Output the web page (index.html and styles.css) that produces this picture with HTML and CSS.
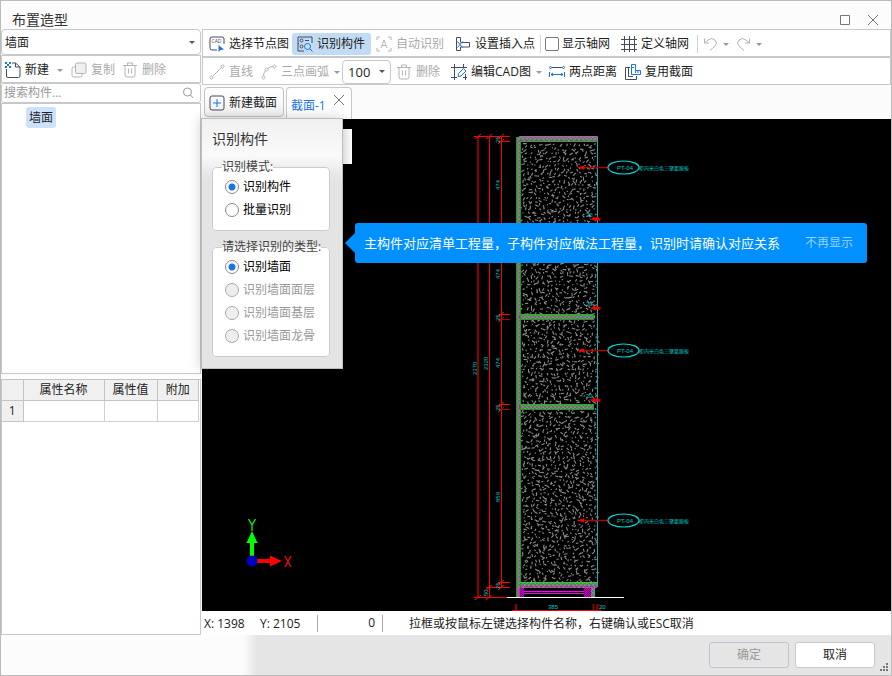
FILE: index.html
```html
<!DOCTYPE html>
<html lang="zh-CN">
<head>
<meta charset="utf-8">
<title>布置造型</title>
<link rel="stylesheet" href="styles.css">
</head>
<body>
<div class="window">
  <header class="titlebar">
    <h1>布置造型</h1>
    <button class="winbtn" aria-label="最大化"><svg width="12" height="12" viewBox="0 0 12 12"><path d="M1.5 1.5h9v9h-9z"/></svg></button>
    <button class="winbtn" aria-label="关闭"><svg width="12" height="12" viewBox="0 0 12 12"><path d="M1 1l10 10M11 1L1 11"/></svg></button>
  </header>

  <main class="main">
    <aside class="side">
      <div class="combo box">
        <select aria-label="构件类型"><option>墙面</option></select>
      </div>
      <div class="tools box">
        <button class="tool"><svg class="ic" viewBox="0 0 16 16"><path d="M1.500 7v7q0 1.500 1.500 1.500h10.500q1.500 0 1.500-1.500V5L10.500 1H7"/><path d="M10.500 1v4H15"/><path class="dots" d="M0 0h2v2H0zM4 0h2v2H4zM2 2h2v2H2zM0 4h2v2H0zM4 4h2v2H4z"/></svg>新建</button>
        <span class="caret gray"></span>
        <button class="tool copy" disabled><svg class="ic" viewBox="0 0 16 16"><path d="M4 5H2.500Q1 5 1 6.500v7Q1 15 2.500 15h7q1.500 0 1.500-1.500V12"/><rect x="4.500" y="1" width="10.500" height="10.500" rx="1.500" fill="#f0f0f0"/></svg>复制</button>
        <button class="tool" disabled><svg class="ic" viewBox="0 0 16 16"><path d="M1 3.500h14M5.500 3V1h5v2M3 3.500V13q0 2 2 2h6q2 0 2-2V3.500M6.500 6.500v5M9.500 6.500v5"/></svg>删除</button>
      </div>
      <div class="search box">
        <input type="text" aria-label="搜索构件" placeholder="搜索构件...">
        <svg width="12" height="12" viewBox="0 0 12 12"><circle cx="5.500" cy="5" r="4"/><path d="M8.500 8l2.500 3"/></svg>
      </div>
      <div class="tree box"><button class="node">墙面</button></div>
      <div class="props">
        <table>
          <colgroup><col class="c-no"><col class="c-name"><col class="c-value"><col class="c-extra"></colgroup>
          <thead><tr><th></th><th>属性名称</th><th>属性值</th><th>附加</th></tr></thead>
          <tbody><tr><th>1</th><td></td><td></td><td></td></tr></tbody>
        </table>
      </div>
    </aside>

    <section class="work">
      <div class="tools bar">
        <button class="tool"><svg class="ic" viewBox="0 0 16 16"><path d="M8 14H3q-2 0-2-2V3q0-2 2-2h10q2 0 2 2v5"/><text x="2.500" y="7">CAD</text><path class="bf" d="M9.500 9v7l2-2 3.500-.5z"/></svg>选择节点图</button>
        <button class="tool active"><svg class="ic" viewBox="0 0 16 16"><path d="M7 15H1V1h14v6"/><circle cx="4.500" cy="4.500" r="1.500"/><circle cx="4.500" cy="10.500" r="1.500"/><path d="M8 4.500h4M1 7.500h1"/><circle class="b" cx="10.500" cy="10.500" r="3"/><path class="b" d="M12.800 12.800L15.500 15.500"/></svg>识别构件</button>
        <button class="tool" disabled><svg class="ic" viewBox="0 0 16 16"><path d="M4 1H1v3M12 1h3v3M1 12v3h3M15 12v3h-3M5 12l3-8 3 8M6 9.500h4"/></svg>自动识别</button>
        <button class="tool far"><svg class="ic" viewBox="0 0 16 16"><path d="M5.500 6V1.500h-4v13h4V11M5.500 6.500h9v4.500h-9"/><path class="b" d="M2.500 5.500l5 6M7.500 5.500l-5 6"/></svg>设置插入点</button>
        <span class="sep"></span>
        <label class="check"><input type="checkbox">显示轴网</label>
        <button class="tool grid"><svg class="ic" viewBox="0 0 16 16"><path d="M0 3.500h16M0 8.500h16M0 13.500h16M3.500 0v16M8.500 0v16M13.500 0v16"/></svg>定义轴网</button>
        <span class="sep wide"></span>
        <button class="tool only" disabled aria-label="撤销"><svg class="ic" viewBox="0 0 16 16"><path d="M1.500 2.500V7H6M1.500 7L5 4q4-3 7 0t0 6l-5 4.500"/></svg></button>
        <span class="caret gray"></span>
        <button class="tool only" disabled aria-label="重做"><svg class="ic" viewBox="0 0 16 16"><path d="M13.500 2.500V7H9M13.500 7L10 4Q6 1 3 4t0 6l5 4.500"/></svg></button>
        <span class="caret gray"></span>
      </div>
      <div class="tools bar">
        <button class="tool" disabled><svg class="ic" viewBox="0 0 16 16"><circle cx="2.500" cy="13.500" r="1.500"/><circle cx="13.500" cy="2.500" r="1.500"/><path d="M3.500 12.500l9-9"/></svg>直线</button>
        <button class="tool" disabled><svg class="ic" viewBox="0 0 16 16"><circle cx="2.500" cy="13.500" r="1.500"/><circle cx="5.500" cy="5.500" r="1.500"/><circle cx="13.500" cy="2.500" r="1.500"/><path d="M2.500 12q0-3 2-5.500M7 4.500Q9 2.500 12 2.500"/></svg>三点画弧</button>
        <span class="caret gray tight"></span>
        <div class="combo scale"><select aria-label="比例"><option>100</option></select></div>
        <button class="tool" disabled><svg class="ic" viewBox="0 0 16 16"><path d="M1 3.500h14M5.500 3V1h5v2M3 3.500V13q0 2 2 2h6q2 0 2-2V3.500M6.500 6.500v5M9.500 6.500v5"/></svg>删除</button>
        <button class="tool far"><svg class="ic" viewBox="0 0 16 16"><path d="M0 3.500h16M3.500 0v16M0 13.500h6M12.500 0v3M14.500 10v6M12 13.500h4"/><path class="b" d="M7 12.500l.5-3 5-5 2.500 2.500-5 5z"/></svg>编辑CAD图</button>
        <span class="caret gray tight"></span>
        <button class="tool"><svg class="ic" viewBox="0 0 16 16"><path d="M3 3.500h10"/><circle class="b" cx="1.500" cy="3.500" r="1"/><circle class="b" cx="14.500" cy="3.500" r="1"/><path class="b" d="M.5 8v5M15.500 8v5M2 10.500h12M4 9l-2 1.500 2 1.500M12 9l2 1.500-2 1.500"/></svg>两点距离</button>
        <button class="tool"><svg class="ic" viewBox="0 0 16 16"><path d="M5 3.500H.5v12h11V12M3.500 3.500v9H8"/><path class="b" d="M6.500.5h4v6h5v4h-9zM7 3.500h2M10.500 7v2M13 7v2"/></svg>复用截面</button>
      </div>
      <nav class="tabs">
        <button class="newtab"><svg class="ic" viewBox="0 0 16 16"><rect x="1" y="1" width="14" height="14" rx="2"/><path class="b" d="M8 4v8M4 8h8"/></svg>新建截面</button>
        <div class="tab"><a href="#section-1">截面-1</a><button aria-label="关闭截面"><svg width="12" height="12" viewBox="0 0 12 12"><path d="M1 1l10 10M11 1L1 11"/></svg></button></div>
      </nav>

      <div class="canvas" id="section-1">
        <svg class="drawing" viewBox="202 119 689 492" preserveAspectRatio="xMinYMin slice">
          <defs>
            <pattern id="ply" width="4" height="4" patternUnits="userSpaceOnUse"><rect width="4" height="4" fill="#707070"/><path d="M0 1h2M2 3h2" stroke="#989898"/></pattern>
            <pattern id="hatch" width="2" height="2" patternUnits="userSpaceOnUse"><rect width="2" height="2" fill="#c0c"/><path d="M0 0h1v1H0zM1 1h1v1H1z" fill="#606"/></pattern>
            <g id="note">
              <path d="M584 167.500h24" stroke="#b00000" stroke-width="1.500"/>
              <path d="M577 167.500l7-2v4z" fill="red"/>
              <ellipse cx="623.500" cy="167.500" rx="15.500" ry="6.500" fill="none" stroke="#00d8d8" stroke-width="1.200"/>
              <text x="617" y="170" class="dim">PT-04</text>
              <text x="639" y="170" class="mat">柜内米白色三聚氰胺板</text>
            </g>
            <g id="inset">
              <text x="586" y="217" class="dim">20</text>
              <path d="M590 219h11M593 216.500l3 5M597 216.500l3 5" stroke="red"/>
              <path d="M591 219l4-2v4zM600 219l-4-2v4z" fill="red"/>
            </g>
            <g id="thick">
              <path d="M499 314.500h11M498 317l6-5" stroke="red"/>
              <path d="M499 319.500h11M498 322l6-5" stroke="#b00000"/>
              <text class="dim" transform="translate(500 321) rotate(-90)">25</text>
            </g>
          </defs>

          <path id="grain" fill="none" stroke="#8c8c8c" stroke-width="1.100"/>

          <g fill="url(#ply)" shape-rendering="crispEdges">
            <rect x="516" y="137" width="5" height="460"/>
            <rect x="520" y="136" width="77" height="6"/>
            <rect x="520" y="314" width="74" height="6"/>
            <rect x="520" y="404" width="74" height="6"/>
            <rect x="520" y="582" width="77" height="6"/>
            <rect x="590" y="588" width="4" height="9"/>
          </g>
          <g fill="none" stroke="#0c0">
            <path stroke="#16a016" d="M516.500 137v460M520.500 141v456"/>
            <path d="M520 141.500h77M520 314.500h74M520 404.500h74"/>
            <path stroke="#16a016" d="M593.500 314v5.500h-73M593.500 404v5.500h-73"/>
            <path stroke="#0e0" d="M520 582.500h77"/>
          </g>
          <g fill="none" stroke="#d0d">
            <path stroke="#b060b0" d="M519 136.500h78.500v5"/>
            <path stroke-dasharray="3 2" d="M520 140.500h77M520 586.500h77"/>
            <path stroke="#f0f" d="M524 591.500h61M524 593.500h61M519.500 588v9"/>
            <path d="M519.500 315v4M519.500 405v4"/>
          </g>
          <path d="M520 588h4v9h-4zM584 588h7v9h-7z" fill="url(#hatch)"/>
          <path d="M597.500 141v446M594.500 588v9" stroke="#10b4b4"/>

          <g stroke="red" fill="none">
            <path stroke="#900000" stroke-width="2" d="M478 136v461"/>
            <path d="M489.500 136v461M501.500 136v452M474 136.500h36M499 141.500h11M498 582.500h12M486 587.500h24M474 597.500h33"/>
          </g>
          <path d="M475 139l6-5M486 139l6-5M498 139l6-5M498 144l6-5M498 585l6-5M498 590l6-5M486 590l6-5M475 600l6-5M486 600l6-5" stroke="red"/>
          <text class="dim" transform="translate(500 143) rotate(-90)">25</text>
          <text class="dim" transform="translate(500 190) rotate(-90)">474</text>
          <text class="dim" transform="translate(500 279) rotate(-90)">474</text>
          <text class="dim" transform="translate(500 368) rotate(-90)">474</text>
          <text class="dim" transform="translate(500 502) rotate(-90)">859</text>
          <text class="dim" transform="translate(500 589) rotate(-90)">25</text>
          <text class="dim" transform="translate(488 596) rotate(-90)">50</text>
          <text class="dim" transform="translate(488 370) rotate(-90)">2320</text>
          <text class="dim" transform="translate(477 375) rotate(-90)">2370</text>
          <use href="#thick"/><use href="#thick" y="90"/>
          <use href="#inset"/><use href="#inset" y="89"/><use href="#inset" y="181"/>
          <use href="#note"/><use href="#note" y="183"/><use href="#note" y="353"/>

          <path d="M507 597.500h117" stroke="#fff"/>
          <path d="M512 610.500h89" stroke="red"/>
          <path d="M516 604v6M593.500 604v6M597.500 604v6" stroke="#900000" stroke-width="2"/>
          <text class="dim" x="548" y="609">385</text><text class="dim" x="599" y="609">20</text>

          <path d="M252 556v-14" stroke="#0f0" stroke-width="4"/><path d="M246.500 543l5.500-12 5.500 12z" fill="#0f0"/>
          <path d="M257 561h14" stroke="red" stroke-width="4"/><path d="M270 555.500l12 5.500-12 5.500z" fill="red"/>
          <circle cx="252" cy="561" r="5.500" fill="#0000c0"/>
          <path d="M248.500 519l3.500 6 3.500-6M252 525v6" fill="none" stroke="#0f0" stroke-width="1.300"/>
          <path d="M285 556l6 11M291 556l-6 11" stroke="red" stroke-width="1.300"/>
        </svg>

        <form class="panel">
          <h2>识别构件</h2>
          <fieldset>
            <legend>识别模式:</legend>
            <label><input type="radio" name="mode" checked>识别构件</label>
            <label><input type="radio" name="mode">批量识别</label>
          </fieldset>
          <fieldset>
            <legend>请选择识别的类型:</legend>
            <label><input type="radio" name="kind" checked>识别墙面</label>
            <label><input type="radio" name="kind" disabled>识别墙面面层</label>
            <label><input type="radio" name="kind" disabled>识别墙面基层</label>
            <label><input type="radio" name="kind" disabled>识别墙面龙骨</label>
          </fieldset>
        </form>
        <div class="peek"></div>
        <div class="tip" role="status">主构件对应清单工程量，子构件对应做法工程量，识别时请确认对应关系<button>不再显示</button></div>
      </div>

      <div class="status">
        <span class="coord">X: 1398</span><span class="coord">Y: 2105</span>
        <span class="count">0</span>
        <span class="hint">拉框或按鼠标左键选择构件名称，右键确认或ESC取消</span>
      </div>
    </section>
  </main>

  <footer class="footer">
    <button disabled>确定</button>
    <button>取消</button>
    <svg class="grip" width="9" height="9" viewBox="0 0 9 9"><path d="M6 0h2v2H6zM3 3h2v2H3zM6 3h2v2H6zM0 6h2v2H0zM3 6h2v2H3zM6 6h2v2H6z"/></svg>
  </footer>
</div>
<script src="grain.js"></script>
</body>
</html>
```
FILE: styles.css
```css
* { box-sizing: border-box; }
body {
  margin: 0;
  font: 12px/16px "Open Sans", "Noto Sans CJK SC", sans-serif;
  color: #222;
}
button, input, select { font: inherit; color: inherit; margin: 0; }
button { border: 0; padding: 0; background: none; white-space: nowrap; }
h1, h2 { margin: 0; font-size: 14px; line-height: 20px; font-weight: normal; color: #333; }

.window {
  height: 100vh;
  display: flex;
  flex-direction: column;
  border: 1px solid #bbb;
  background: #fcfcfc;
}
.titlebar { display: flex; align-items: center; gap: 16px; height: 28px; flex: none; padding: 9px 12px 0 11px; }
.titlebar h1 { flex: 1; }
.winbtn { display: flex; }
.winbtn svg, .tab svg { fill: none; stroke: #777; }

.main { flex: 1; min-height: 0; display: grid; grid-template-columns: 200px minmax(0, 1fr); gap: 1px; }
.side { display: flex; flex-direction: column; min-height: 0; }
.box { border: 1px solid #c6c8cc; background: #fff; flex: none; }

.combo { position: relative; height: 26px; border-radius: 4px; }
.combo select { width: 100%; height: 100%; appearance: none; border: 0; outline: 0; background: none; padding: 1px 3px 0; }
.combo::after, .caret {
  content: "";
  width: 0;
  height: 0;
  border: 3px solid transparent;
  border-top-color: #555;
  border-bottom: 0;
}
.combo::after { position: absolute; right: 5px; top: 11px; pointer-events: none; }
.caret { margin: 0 4px; flex: none; }
.caret.gray { border-top-color: #999; }
.caret.tight { margin: 0 2px; }

.tools { display: flex; align-items: center; height: 28px; padding-top: 2px; }
.tool { display: flex; align-items: center; gap: 4px; height: 22px; padding: 0 3px 0 5px; border-radius: 3px; }
.tool:disabled { color: #aaa; }
.tool.active { background: #c2dbf4; padding-right: 6px; }
.tool.far, .tool.grid { margin-left: 3px; }
.tool.only { padding: 0 0 0 3px; }
.ic { width: 16px; height: 16px; fill: none; stroke: #454b5e; flex: none; }
:disabled .ic { stroke: #b4b4b4; }
.ic .b { stroke: #1a73e8; }
.ic .bf { fill: #1a73e8; stroke: none; }
.ic .dots { fill: #1a73e8; stroke: none; }
.ic text { font-size: 5px; fill: #454b5e; stroke: none; }
.side .tool { padding: 0 4px 0 3px; }
.side .copy { padding-left: 4px; }

.search { display: flex; align-items: center; height: 20px; padding-right: 6px; border-radius: 3px; }
.search input { flex: 1; min-width: 0; border: 0; outline: 0; padding: 0 2px; background: none; }
.search input::placeholder { color: #999; opacity: 1; }
.search svg { fill: none; stroke: #999; }

.tree { flex: 0 1 271px; padding: 3px 24px; }
.node { height: 21px; padding: 0 3px; border-radius: 3px; background: #cce2fa; }

.props { flex: 1; min-height: 0; margin-top: 5px; border: 1px solid #c6c8cc; background: #fff; }
.props table { width: 197px; table-layout: fixed; border-collapse: collapse; margin: -1px 0 0 0; }
.props th, .props td { height: 21px; padding: 0; border: 1px solid #d0d0d0; font-weight: normal; text-align: center; }
.props th { background: #f0f0f0; border-color: #c4c4c4; }
.props tr > :first-child { border-left: 0; }
.c-no { width: 21px; }
.c-name { width: 81px; }
.c-value { width: 53px; }

.work { display: flex; flex-direction: column; min-width: 0; min-height: 0; }
.bar { border: 1px solid #c6c8cc; background: #fff; flex: none; padding-left: 1px; }
.sep { width: 1px; height: 18px; background: #d0d0d0; margin: 0 4px 0 2px; flex: none; }
.sep.wide { margin: 0 2px 0 5px; }
.check { display: flex; align-items: center; gap: 3px; margin-right: 3px; white-space: nowrap; }
.check input { appearance: none; width: 14px; height: 14px; border: 1px solid #777; border-radius: 2px; background: #fff; }
.scale { width: 49px; height: 24px; border: 1px solid #c6c8cc; }
.scale select { padding: 0 5px; font-size: 13px; }
.scale.combo::after { top: 9px; }

.tabs { display: flex; gap: 2px; height: 34px; flex: none; padding: 2px 2px 0; background: #fbfbfb; }
.newtab { display: flex; align-items: center; gap: 4px; height: 30px; width: 80px; padding: 1px 4px 0; border: 1px solid #bfc1c5; border-radius: 4px; background: linear-gradient(#fff, #f2f2f2); }
.tab { display: flex; gap: 7px; width: 66px; padding: 0 6px 0 4px; border: 1px solid #c6c8cc; border-bottom: 0; border-radius: 4px 4px 0 0; background: #fff; }
.tab a { color: #1a73e8; text-decoration: none; line-height: 20px; padding-top: 8px; white-space: nowrap; }
.tab button { display: flex; padding-top: 6px; }

.canvas { position: relative; flex: 1; min-height: 0; background: #000; }
.drawing { display: block; width: 100%; height: 100%; }
.dim { font: 6px "Liberation Sans Narrow", "Liberation Sans", sans-serif; fill: #00c8c8; }
.mat { font: 5px "Noto Sans CJK SC", sans-serif; fill: #00c8c8; }

.panel {
  position: absolute;
  left: -1px;
  top: -1px;
  width: 142px;
  padding: 10px 12px 11px 10px;
  border: 1px solid #bdbdbd;
  background: linear-gradient(#f0f0f0, #fafafa 36px, #e4e4e4 60px);
  box-shadow: 0 0 12px rgba(0, 0, 0, .2);
}
.panel fieldset { min-width: 0; margin: 10px 0 0; padding: 0 0 9px 9px; border: 1px solid #ccc; border-radius: 4px; background: #fff; }
.panel fieldset + fieldset { margin-top: 8px; }
.panel legend { padding: 0; line-height: 16px; color: #444; white-space: nowrap; }
.panel label { display: flex; align-items: center; gap: 4px; height: 23px; padding-left: 3px; color: #000; white-space: nowrap; }
.panel label:has(:disabled) { color: #999; }
.panel input { appearance: none; width: 14px; height: 14px; border: 1px solid #888; border-radius: 50%; background: #fff; }
.panel input:checked { background: radial-gradient(circle, #1a73e8 3px, #fff 4px); }
.panel input:disabled { border-color: #aaa; background: #eee; }

.peek { position: absolute; left: 141px; top: 10px; width: 9px; height: 35px; background: linear-gradient(90deg, #ddd, #fff); }
.tip {
  position: absolute;
  left: 153px;
  top: 104px;
  height: 40px;
  display: flex;
  align-items: center;
  gap: 25px;
  padding: 0 14px 0 9px;
  border-radius: 3px;
  background: #0090ff;
  color: #fff;
  font-size: 13px;
  white-space: nowrap;
}
.tip::before { content: ""; position: absolute; left: -10px; top: 10px; border: 10px solid transparent; border-left: 0; border-right-color: #0090ff; }
.tip button { font-size: 12px; color: #99d0ff; }

.status { display: flex; align-items: center; height: 24px; flex: none; padding: 1px 0 0 2px; background: #fff; }
.coord { width: 56px; white-space: nowrap; }
.count { width: 66px; height: 17px; margin-left: 1px; padding-right: 7px; border: solid #aaa; border-width: 0 1px; text-align: right; }
.hint { margin-left: 26px; white-space: nowrap; }

.footer {
  position: relative;
  display: flex;
  justify-content: flex-end;
  align-items: center;
  gap: 6px;
  height: 40px;
  flex: none;
  padding: 0 16px 0 0;
  background: linear-gradient(90deg, #fcfcfc 242px, #e5e5e5 256px);
}
.footer button { width: 80px; height: 26px; border: 1px solid #c6c8cc; border-radius: 3px; background: #fff; }
.footer button:disabled { background: none; border-color: #bcc4d0; color: #999; }
.grip { position: absolute; right: 2px; bottom: 3px; fill: #777; }
```
FILE: grain.js
```js
// Scatters the short strokes of the board's section fill.
(function () {
  var seed = 7, d = "";
  function rnd() { seed = (seed * 16807) % 2147483647; return seed / 2147483647; }
  for (var y = 143; y < 581; y += 4) {
    for (var x = 522; x < 595; x += 4) {
      var a = rnd() * Math.PI, l = 1 + rnd() * 3;
      d += "M" + (x + rnd() * 3).toFixed(1) + " " + (y + rnd() * 3).toFixed(1) +
        "l" + (Math.cos(a) * l).toFixed(1) + " " + (Math.sin(a) * l).toFixed(1);
    }
  }
  document.getElementById("grain").setAttribute("d", d);
})();
```
